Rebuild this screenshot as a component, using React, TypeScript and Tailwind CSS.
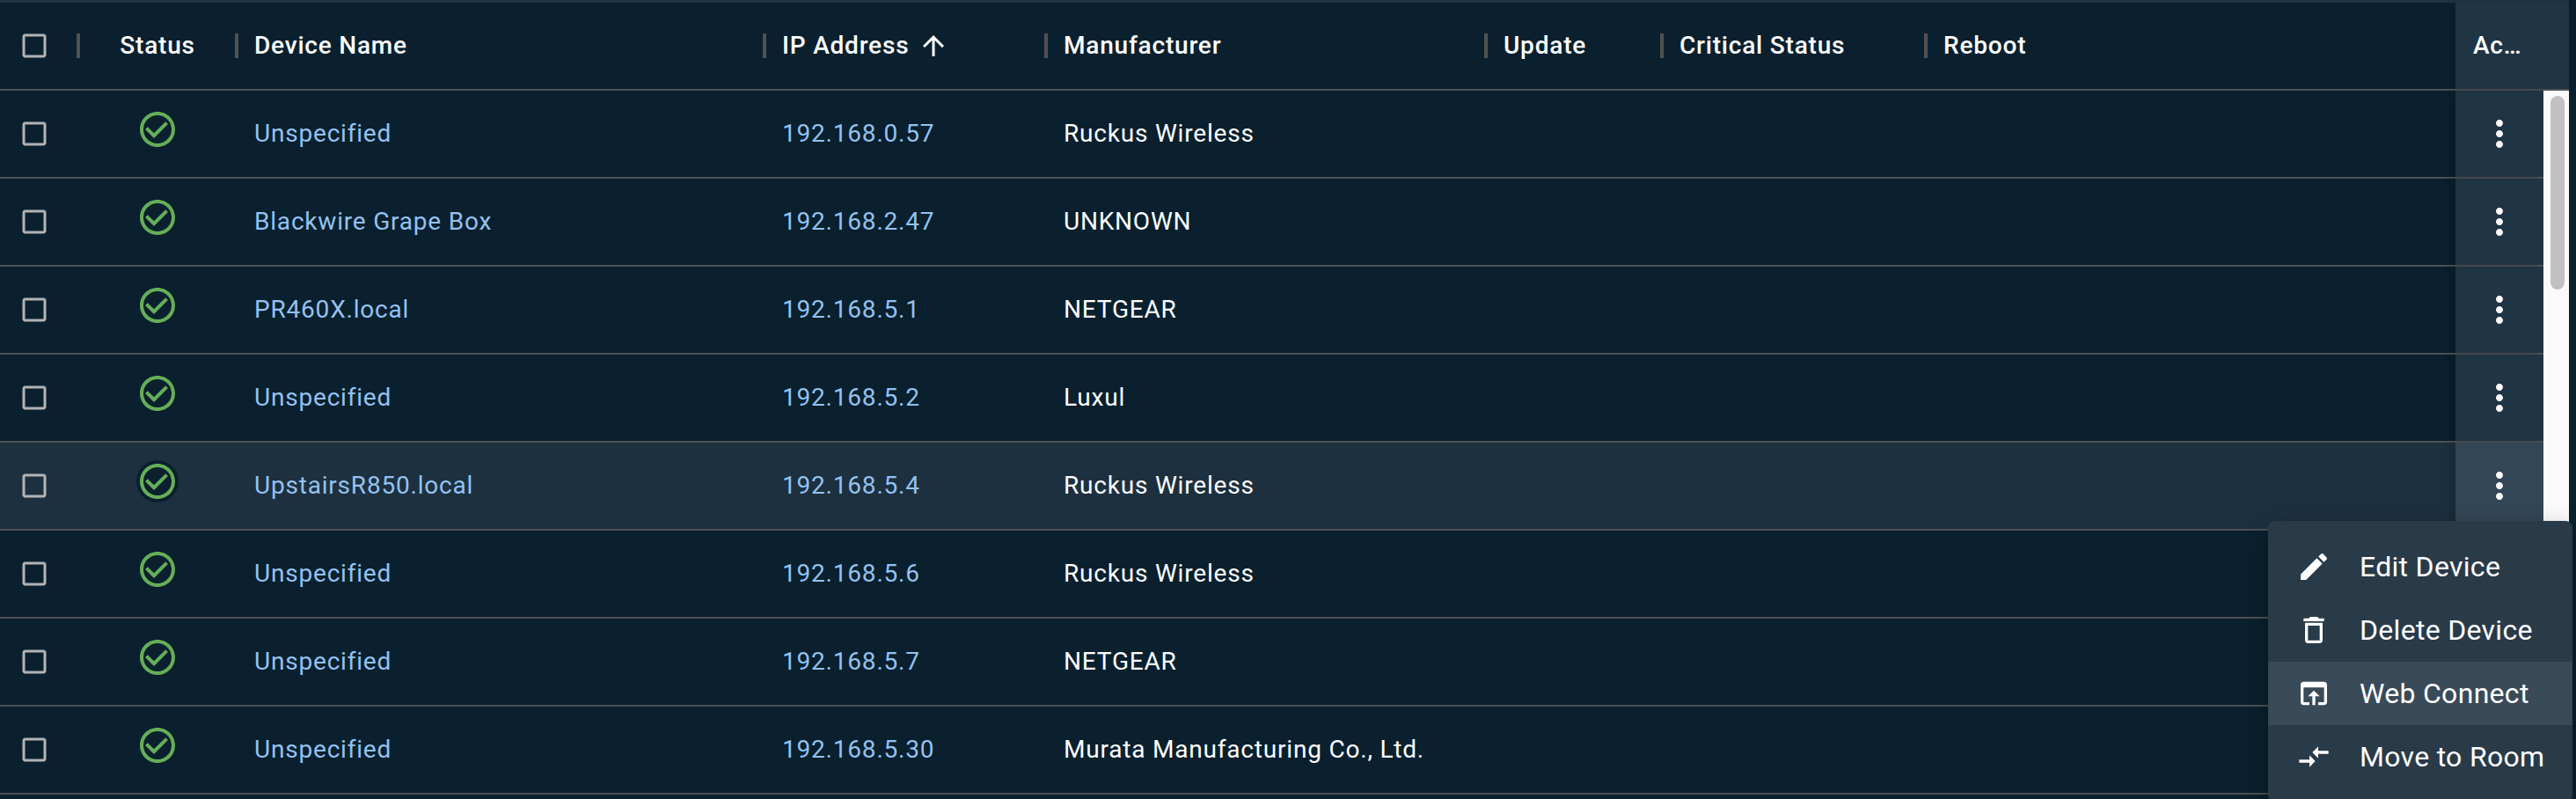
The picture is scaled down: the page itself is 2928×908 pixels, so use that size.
import React from "react";

const rows = [
  { name: "Unspecified", ip: "192.168.0.57", maker: "Ruckus Wireless" },
  { name: "Blackwire Grape Box", ip: "192.168.2.47", maker: "UNKNOWN" },
  { name: "PR460X.local", ip: "192.168.5.1", maker: "NETGEAR" },
  { name: "Unspecified", ip: "192.168.5.2", maker: "Luxul" },
  { name: "UpstairsR850.local", ip: "192.168.5.4", maker: "Ruckus Wireless", hover: true },
  { name: "Unspecified", ip: "192.168.5.6", maker: "Ruckus Wireless" },
  { name: "Unspecified", ip: "192.168.5.7", maker: "NETGEAR" },
  { name: "Unspecified", ip: "192.168.5.30", maker: "Murata Manufacturing Co., Ltd." },
];

const Icon = ({ d, className }: { d: string; className: string }) => (
  <svg viewBox="0 0 24 24" fill="currentColor" className={className}>
    <path d={d} />
  </svg>
);

const BOX = "M19 5v14H5V5h14m0-2H5c-1.1 0-2 .9-2 2v14c0 1.1.9 2 2 2h14c1.1 0 2-.9 2-2V5c0-1.1-.9-2-2-2z";
const CHECK =
  "M16.59 7.58 10 14.17l-3.59-3.58L5 12l5 5 8-8zM12 2C6.48 2 2 6.48 2 12s4.48 10 10 10 10-4.48 10-10S17.52 2 12 2m0 18c-4.42 0-8-3.58-8-8s3.58-8 8-8 8 3.58 8 8-3.58 8-8 8";
const DOTS =
  "M12 8c1.1 0 2-.9 2-2s-.9-2-2-2-2 .9-2 2 .9 2 2 2m0 2c-1.1 0-2 .9-2 2s.9 2 2 2 2-.9 2-2-.9-2-2-2m0 6c-1.1 0-2 .9-2 2s.9 2 2 2 2-.9 2-2-.9-2-2-2";
const ARROW = "M4 12l1.41 1.41L11 7.83V20h2V7.83l5.58 5.59L20 12l-8-8-8 8z";

const menu = [
  { label: "Edit Device", d: "M3 17.25V21h3.75L17.81 9.94l-3.75-3.75zM20.71 7.04c.39-.39.39-1.02 0-1.41l-2.34-2.34a.9959.9959 0 0 0-1.41 0l-1.83 1.83 3.75 3.75z" },
  { label: "Delete Device", d: "M6 19c0 1.1.9 2 2 2h8c1.1 0 2-.9 2-2V7H6zM8 9h8v10H8zm7.5-5-1-1h-5l-1 1H5v2h14V4z" },
  { label: "Web Connect", d: "M19 4H5c-1.11 0-2 .9-2 2v12c0 1.1.89 2 2 2h4v-2H5V8h14v10h-4v2h4c1.1 0 2-.9 2-2V6c0-1.1-.89-2-2-2m-7 6-4 4h3v6h2v-6h3z", active: true },
  { label: "Move to Room", d: "M9.01 14H2v2h7.01v3L13 15l-3.99-4zm5.98-1v-3H22V8h-7.01V5L11 9z" },
];

const Sep = () => <div className="ml-auto h-[28px] w-[4px] shrink-0 bg-[#515151]" />;

export default function App() {
  return (
    <div className="relative h-[908px] w-[2928px] overflow-hidden bg-[#0a202e] font-['Roboto',sans-serif] text-[28px] tracking-[0.8px] text-white">
      <div className="h-[3px] w-[2920px] bg-[#1f3344]" />

      {/* header */}
      <div className="flex h-[100px] w-[2920px] items-center border-b-2 border-[#515151] font-medium">
        <div className="flex w-[91px] items-center pl-[21px]">
          <Icon d={BOX} className="h-[36px] w-[36px] text-[#b3b3b3]" />
          <Sep />
        </div>
        <div className="flex w-[180px] items-center">
          <span className="flex-1 text-center">Status</span>
          <Sep />
        </div>
        <div className="flex w-[600px] items-center pl-[18px]">
          Device Name
          <Sep />
        </div>
        <div className="flex w-[320px] items-center pl-[18px]">
          IP Address
          <Icon d={ARROW} className="ml-[10px] h-[36px] w-[36px]" />
          <Sep />
        </div>
        <div className="flex w-[500px] items-center pl-[18px]">
          Manufacturer
          <Sep />
        </div>
        <div className="flex w-[200px] items-center pl-[18px]">
          Update
          <Sep />
        </div>
        <div className="flex w-[300px] items-center pl-[18px]">
          Critical Status
          <Sep />
        </div>
        <div className="w-[600px] pl-[18px]">Reboot</div>
        <div className="flex h-full w-[129px] items-center bg-[#203544] pl-[20px] shadow-[-4px_0_8px_rgba(0,0,0,0.12)]">
          <span className="w-[60px] truncate">Actions</span>
        </div>
      </div>

      {/* body */}
      <div className="flex w-[2920px]">
        <div className="flex-1">
          {rows.map((r, i) => (
            <div
              key={i}
              className={`flex h-[100px] items-center border-b-2 border-[#515151] ${r.hover ? "bg-[#1d303f]" : ""}`}
            >
              <div className="w-[91px] pl-[21px]">
                <Icon d={BOX} className="h-[36px] w-[36px] text-[#b3b3b3]" />
              </div>
              <div className="flex w-[176px] justify-center">
                <div className={`-mt-[10px] rounded-full ${r.hover ? "bg-[#0a202e]" : ""}`}>
                  <Icon d={CHECK} className="h-[48px] w-[48px] text-[#66ae57]" />
                </div>
              </div>
              <div className="w-[604px] pl-[22px] text-[#94c2f0]">{r.name}</div>
              <div className="w-[320px] pl-[18px] text-[#94c2f0]">{r.ip}</div>
              <div className="w-[1600px] pl-[18px]">{r.maker}</div>
              <div
                className={`ml-auto flex h-full w-[100px] items-center justify-center shadow-[-6px_0_10px_rgba(0,0,0,0.14)] ${r.hover ? "bg-[#334656]" : "bg-[#203544]"}`}
              >
                <Icon d={DOTS} className="h-[48px] w-[48px]" />
              </div>
            </div>
          ))}
        </div>
        <div className="w-[29px] bg-[#fafafa] pl-[8px] pt-[6px]">
          <div className="h-[220px] w-[16px] rounded-full bg-[#c1c1c1]" />
        </div>
      </div>

      {/* row actions menu */}
      <div className="absolute right-[4px] top-[592px] w-[346px] rounded-[8px] bg-[#293a49] py-[16px] text-[32px] tracking-[0.3px] shadow-[0_10px_26px_rgba(0,0,0,0.35)]">
        {menu.map((m) => (
          <div
            key={m.label}
            className={`flex h-[72px] items-center pl-[32px] ${m.active ? "bg-[#394a58]" : ""}`}
          >
            <Icon d={m.d} className="mr-[32px] h-[40px] w-[40px]" />
            {m.label}
          </div>
        ))}
      </div>
    </div>
  );
}
